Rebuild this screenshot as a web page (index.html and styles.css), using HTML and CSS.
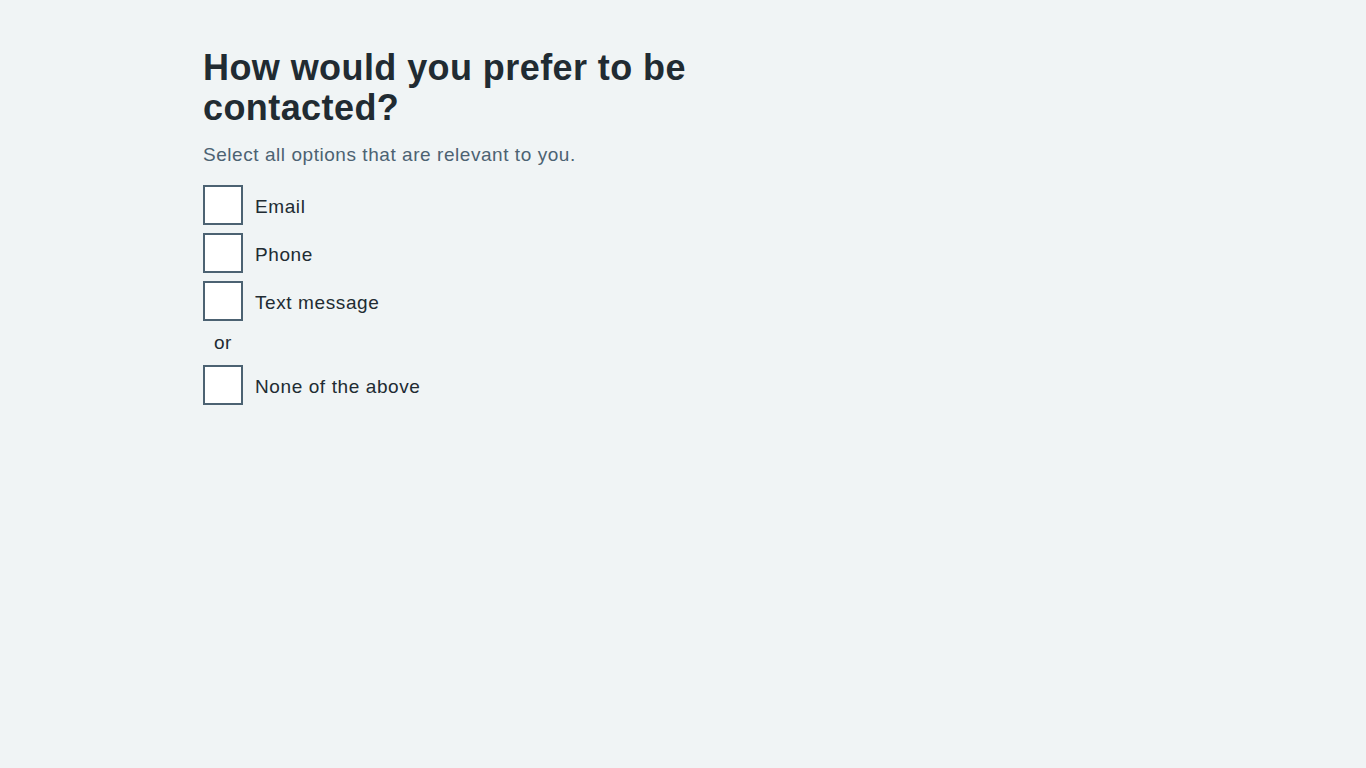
FILE: index.html
```html
<!DOCTYPE html>
<html lang="en">
<head>
<meta charset="utf-8">
<title>Contact preferences</title>
<link rel="stylesheet" href="styles.css">
</head>
<body>
<main class="container">
  <div class="column">
    <fieldset class="fieldset">
      <legend class="legend"><h1 class="heading">How would you prefer to be contacted?</h1></legend>
      <div class="hint">Select all options that are relevant to you.</div>
      <div class="checkboxes">
        <label class="item"><input type="checkbox" class="box"><span class="label">Email</span></label>
        <label class="item"><input type="checkbox" class="box"><span class="label">Phone</span></label>
        <label class="item"><input type="checkbox" class="box"><span class="label">Text message</span></label>
        <div class="divider">or</div>
        <label class="item"><input type="checkbox" class="box"><span class="label">None of the above</span></label>
      </div>
    </fieldset>
  </div>
</main>
</body>
</html>
```
FILE: styles.css
```css
html, body {
  margin: 0;
  padding: 0;
  background: #f0f4f5;
}
body {
  font-family: "Liberation Sans", Arial, sans-serif;
  color: #212b32;
}
.container {
  max-width: 960px;
  margin: 0 auto;
  padding-top: 48px;
}
.column {
  width: 608px;
}
.fieldset {
  border: 0;
  margin: 0;
  padding: 0;
  min-width: 0;
}
.legend {
  padding: 0;
  margin: 0 0 13px;
}
.heading {
  margin: 0;
  font-size: 36px;
  line-height: 40px;
  font-weight: 700;
  letter-spacing: 0.42px;
}
.hint {
  font-size: 19px;
  line-height: 28px;
  color: #4c6272;
  margin-bottom: 16px;
  letter-spacing: 0.55px;
}
.checkboxes {
  display: flex;
  flex-direction: column;
  gap: 8px;
}
.item {
  display: flex;
  align-items: center;
  min-height: 40px;
}
.box {
  appearance: none;
  -webkit-appearance: none;
  margin: 0;
  width: 40px;
  height: 40px;
  box-sizing: border-box;
  border: 2px solid #4c6272;
  background: #fff;
  flex: none;
}
.label {
  font-size: 19px;
  line-height: 28px;
  padding: 4px 12px 0;
  letter-spacing: 0.6px;
}
.divider {
  width: 40px;
  text-align: center;
  font-size: 19px;
  line-height: 28px;
  letter-spacing: 0.6px;
}
```
